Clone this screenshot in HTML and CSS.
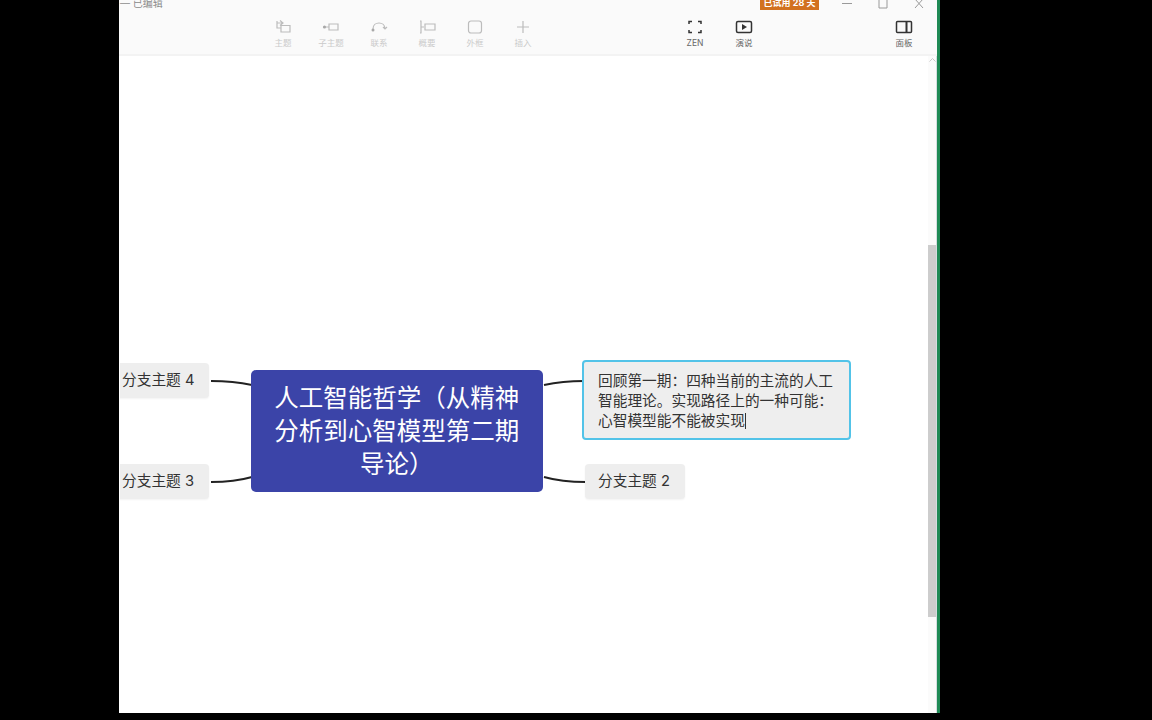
FILE: index.html
```html
<!DOCTYPE html>
<html lang="zh">
<head>
<meta charset="utf-8">
<title>思维导图</title>
<link rel="stylesheet" href="styles.css">
</head>
<body>
<div class="window">
  <header class="titlebar">
    <span class="doc-state">— 已编辑</span>
    <span class="trial">已试用 28 天</span>
    <div class="win-controls">
      <svg width="12" height="10" viewBox="0 0 12 10"><path d="M1 3.500h10" class="wc"/></svg>
      <svg width="12" height="10" viewBox="0 0 12 10"><path d="M2 -2h8v10H2z" class="wc"/></svg>
      <svg width="12" height="10" viewBox="0 0 12 10"><path d="M2 -1l8 9M10 -1l-8 9" class="wc"/></svg>
    </div>
  </header>
  <nav class="toolbar">
    <div class="tool muted"><svg width="18" height="16" viewBox="0 0 18 16"><path d="M3 2v7h4M3 4h6M6 1.500l3 2.500-3 2.500M7 6.500h9v6.500H7z" class="ti"/></svg><span>主题</span></div>
    <div class="tool muted"><svg width="18" height="16" viewBox="0 0 18 16"><circle cx="2.500" cy="8" r="1.600" fill="#a8a8a8"/><path d="M4 8h3M7 5h9v6H7z" class="ti"/></svg><span>子主题</span></div>
    <div class="tool muted"><svg width="18" height="16" viewBox="0 0 18 16"><path d="M3 10C3 2 15 2 15 10M13 8l2 2 2-2" class="ti"/><circle cx="3" cy="11" r="1.500" fill="#a8a8a8"/></svg><span>联系</span></div>
    <div class="tool muted"><svg width="18" height="16" viewBox="0 0 18 16"><path d="M2 2h1.500M2 14h1.500M3 2v12M3 8h3M7 5h10v6H7z" class="ti"/></svg><span>概要</span></div>
    <div class="tool muted"><svg width="18" height="16" viewBox="0 0 18 16"><rect x="2.500" y="2" width="13" height="12" rx="2.500" class="ti"/></svg><span>外框</span></div>
    <div class="tool muted"><svg width="18" height="16" viewBox="0 0 18 16"><path d="M9 2v12M3 8h12" class="ti"/></svg><span>插入</span></div>
    <div class="tool zen"><svg width="18" height="16" viewBox="0 0 18 16"><path d="M3 5V2.500h3M12 2.500h3V5M15 11v2.500h-3M6 13.500H3V11" class="td"/></svg><span>ZEN</span></div>
    <div class="tool"><svg width="18" height="16" viewBox="0 0 18 16"><rect x="1.500" y="2.500" width="15" height="11" rx="1.500" class="td"/><path d="M7 5l5 3-5 3z" fill="#333"/></svg><span>演说</span></div>
    <div class="tool panel"><svg width="18" height="16" viewBox="0 0 18 16"><rect x="1.500" y="2.500" width="15" height="11" rx="1" class="td"/><path d="M11.500 3v10" class="tp"/></svg><span>面板</span></div>
  </nav>
  <main class="canvas">
    <svg class="links" width="808" height="658" viewBox="0 1 808 658">
      <path d="M91 326C108 326 118 327 132 330"/>
      <path d="M91 427C108 427 118 426 132 422"/>
      <path d="M424 330C438 327 448 326 464 326"/>
      <path d="M424 422C438 426 448 427 466 427"/>
    </svg>
    <div class="node central">人工智能哲学（从精神<br>分析到心智模型第二期<br>导论）</div>
    <div class="node branch b4">分支主题 4</div>
    <div class="node branch b3">分支主题 3</div>
    <div class="node branch b2">分支主题 2</div>
    <div class="node branch selected">回顾第一期：四种当前的主流的人工智能理论。实现路径上的一种可能：心智模型能不能被实现<i class="caret"></i></div>
    <div class="scrollbar">
      <svg class="sb-arrow" width="9" height="8" viewBox="0 0 9 8"><path d="M1.500 5.500l3-3 3 3"/></svg>
      <div class="thumb"></div>
    </div>
  </main>
</div>
<div class="edge"></div>
</body>
</html>
```

FILE: styles.css
```css
* { box-sizing: border-box; }
html, body { height: 100%; }
body {
  margin: 0;
  background: #000;
  display: flex;
  align-items: flex-start;
  padding-left: 119px;
  overflow: hidden;
  font-family: "Inter", "Noto Sans CJK SC", "Liberation Sans", sans-serif;
}
.window {
  width: 818px;
  height: 713px;
  background: #fff;
  display: flex;
  flex-direction: column;
}
.edge { width: 3px; height: 713px; background: #1f8a55; }

.titlebar {
  height: 11px;
  flex: none;
  background: #fafafa;
  display: flex;
  align-items: flex-end;
  padding-left: 1px;
  overflow: hidden;
  position: relative;
}
.doc-state {
  font-size: 10px;
  line-height: 14px;
  height: 14px;
  margin-bottom: 1px;
  color: #8a8a8a;
}
.trial {
  margin-left: auto;
  margin-right: 118px;
  width: 59px;
  height: 14px;
  line-height: 14px;
  margin-bottom: 1px;
  text-align: center;
  font-size: 9px;
  font-weight: 700;
  color: #fff;
  background: #d2711f;
}
.win-controls {
  position: absolute;
  top: 0;
  left: 722px;
  display: flex;
  gap: 24px;
}
.wc { fill: none; stroke: #9a9a9a; stroke-width: 1; }

.toolbar {
  height: 45px;
  flex: none;
  background: #fafafa;
  border-bottom: 2px solid #f3f3f3;
  padding-left: 140px;
  display: flex;
  align-items: flex-start;
}
.tool {
  width: 48px;
  padding-top: 8px;
  display: flex;
  flex-direction: column;
  align-items: center;
  font-size: 8.500px;
  line-height: 12px;
  color: #666;
}
.tool span { margin-top: 2px; }
.tool.muted { color: #cacaca; }
.zen { margin-left: 124px; }
.zen + .tool { margin-left: 1px; }
.panel { margin-left: 112px; }
.ti { fill: none; stroke: #bcbcbc; stroke-width: 1.200; }
.td { fill: none; stroke: #333; stroke-width: 1.500; }
.tp { fill: none; stroke: #333; stroke-width: 2; }

.canvas {
  flex: 1;
  position: relative;
  overflow: hidden;
  background: #fff;
  margin-left: 1px;
}
.links { position: absolute; left: 0; top: 0; }
.links path { fill: none; stroke: #222; stroke-width: 2; }

.node { position: absolute; border-radius: 4px; }
.central {
  left: 130.500px;
  top: 314px;
  width: 292.500px;
  height: 122px;
  border-radius: 5px;
  background: #3b44a8;
  color: #fff;
  font-size: 24.500px;
  line-height: 33px;
  text-align: center;
  padding-top: 12px;
}
.branch {
  background: #eeeeee;
  color: #333;
  font-size: 14.700px;
  line-height: 20px;
  padding: 7px 13px;
  height: 35px;
  white-space: nowrap;
  box-shadow: 0 1px 2px rgba(0, 0, 0, 0.05);
}
.b4 { left: -11px; top: 307px; width: 100px; }
.b3 { left: -11px; top: 408px; width: 100px; }
.b2 { left: 465px; top: 408px; width: 100px; }
.selected {
  left: 462px;
  top: 304px;
  width: 269px;
  height: 80px;
  padding: 9px 14px;
  border: 2px solid #52c3e8;
  white-space: normal;
  box-shadow: none;
}
.caret {
  display: inline-block;
  width: 1px;
  height: 16px;
  background: #333;
  vertical-align: -3px;
}
.scrollbar {
  position: absolute;
  right: 0;
  top: 0;
  bottom: 0;
  width: 9px;
  background: #fbfbfb;
  border-right: 1px solid #d5dde0;
}
.sb-arrow { display: block; }
.sb-arrow path { fill: none; stroke: #c8c8c8; stroke-width: 1; }
.thumb {
  margin-top: 181px;
  height: 372px;
  background: #cdcdcd;
}
```
